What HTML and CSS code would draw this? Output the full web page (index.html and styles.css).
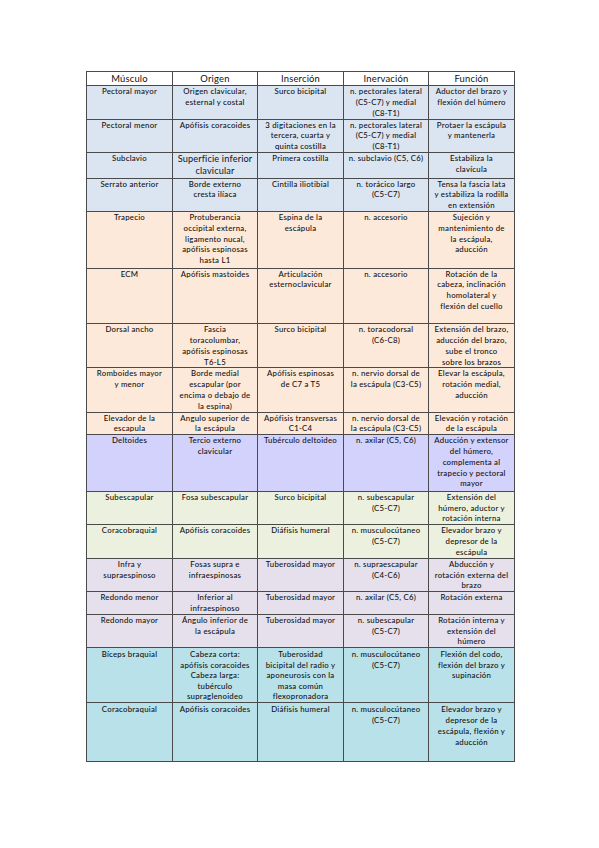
FILE: index.html
```html
<!DOCTYPE html>
<html lang="es">
<head>
<meta charset="utf-8">
<title>Músculos</title>
<link rel="stylesheet" href="styles.css">
</head>
<body>
<table class="tabla">
  <colgroup>
    <col class="c1"><col class="c2"><col class="c3"><col class="c4"><col class="c5">
  </colgroup>
  <thead>
    <tr class="head">
      <th>Músculo</th><th>Origen</th><th>Inserción</th><th>Inervación</th><th>Función</th>
    </tr>
  </thead>
  <tbody>
    <tr class="azul r34">
      <td>Pectoral mayor</td>
      <td>Origen clavicular,<br>esternal y costal</td>
      <td>Surco bicipital</td>
      <td>n. pectorales lateral<br>(C5-C7) y medial<br>(C8-T1)</td>
      <td>Aductor del brazo y<br>flexión del húmero</td>
    </tr>
    <tr class="azul r33">
      <td>Pectoral menor</td>
      <td>Apófisis coracoides</td>
      <td>3 digitaciones en la<br>tercera, cuarta y<br>quinta costilla</td>
      <td>n. pectorales lateral<br>(C5-C7) y medial<br>(C8-T1)</td>
      <td>Protaer la escápula<br>y mantenerla</td>
    </tr>
    <tr class="azul r26">
      <td>Subclavio</td>
      <td class="grande">Superficie inferior<br>clavicular</td>
      <td>Primera costilla</td>
      <td>n. subclavio (C5, C6)</td>
      <td>Estabiliza la<br>clavícula</td>
    </tr>
    <tr class="azul r32">
      <td>Serrato anterior</td>
      <td>Borde externo<br>cresta ilíaca</td>
      <td>Cintilla iliotibial</td>
      <td>n. torácico largo<br>(C5-C7)</td>
      <td>Tensa la fascia lata<br>y estabiliza la rodilla<br>en extensión</td>
    </tr>
    <tr class="salmon r57">
      <td>Trapecio</td>
      <td>Protuberancia<br>occipital externa,<br>ligamento nucal,<br>apófisis espinosas<br>hasta L1</td>
      <td>Espina de la<br>escápula</td>
      <td>n. accesorio</td>
      <td>Sujeción y<br>mantenimiento de<br>la escápula,<br>aducción</td>
    </tr>
    <tr class="salmon r56">
      <td>ECM</td>
      <td>Apófisis mastoides</td>
      <td>Articulación<br>esternoclavicular</td>
      <td>n. accesorio</td>
      <td>Rotación de la<br>cabeza, inclinación<br>homolateral y<br>flexión del cuello</td>
    </tr>
    <tr class="salmon r44">
      <td>Dorsal ancho</td>
      <td>Fascia<br>toracolumbar,<br>apófisis espinosas<br>T6-L5</td>
      <td>Surco bicipital</td>
      <td>n. toracodorsal<br>(C6-C8)</td>
      <td>Extensión del brazo,<br>aducción del brazo,<br>sube el tronco<br>sobre los brazos</td>
    </tr>
    <tr class="salmon r44">
      <td>Romboides mayor<br>y menor</td>
      <td>Borde medial<br>escapular (por<br>encima o debajo de<br>la espina)</td>
      <td>Apófisis espinosas<br>de C7 a T5</td>
      <td>n. nervio dorsal de<br>la escápula (C3-C5)</td>
      <td>Elevar la escápula,<br>rotación medial,<br>aducción</td>
    </tr>
    <tr class="salmon r23">
      <td>Elevador de la<br>escapula</td>
      <td>Angulo superior de<br>la escápula</td>
      <td>Apófisis transversas<br>C1-C4</td>
      <td>n. nervio dorsal de<br>la escápula (C3-C5)</td>
      <td>Elevación y rotación<br>de la escápula</td>
    </tr>
    <tr class="lavanda r57">
      <td>Deltoides</td>
      <td>Tercio externo<br>clavicular</td>
      <td>Tubérculo deltoideo</td>
      <td>n. axilar (C5, C6)</td>
      <td>Aducción y extensor<br>del húmero,<br>complementa al<br>trapecio y pectoral<br>mayor</td>
    </tr>
    <tr class="verde r33">
      <td>Subescapular</td>
      <td>Fosa subescapular</td>
      <td>Surco bicipital</td>
      <td>n. subescapular<br>(C5-C7)</td>
      <td>Extensión del<br>húmero, aductor y<br>rotación interna</td>
    </tr>
    <tr class="verde r34">
      <td>Coracobraquial</td>
      <td>Apófisis coracoides</td>
      <td>Diáfisis humeral</td>
      <td>n. musculocútaneo<br>(C5-C7)</td>
      <td>Elevador brazo y<br>depresor de la<br>escápula</td>
    </tr>
    <tr class="lila r34">
      <td>Infra y<br>supraespinoso</td>
      <td>Fosas supra e<br>infraespinosas</td>
      <td>Tuberosidad mayor</td>
      <td>n. supraescapular<br>(C4-C6)</td>
      <td>Abducción y<br>rotación externa del<br>brazo</td>
    </tr>
    <tr class="lila r23">
      <td>Redondo menor</td>
      <td>Inferior al<br>infraespinoso</td>
      <td>Tuberosidad mayor</td>
      <td>n. axilar (C5, C6)</td>
      <td>Rotación externa</td>
    </tr>
    <tr class="lila r33">
      <td>Redondo mayor</td>
      <td>Ángulo inferior de<br>la escápula</td>
      <td>Tuberosidad mayor</td>
      <td>n. subescapular<br>(C5-C7)</td>
      <td>Rotación interna y<br>extensión del<br>húmero</td>
    </tr>
    <tr class="aqua r54">
      <td>Bíceps braquial</td>
      <td>Cabeza corta:<br>apófisis coracoides<br>Cabeza larga:<br>tubérculo<br>supraglenoideo</td>
      <td>Tuberosidad<br>bicipital del radio y<br>aponeurosis con la<br>masa común<br>flexopronadora</td>
      <td>n. musculocútaneo<br>(C5-C7)</td>
      <td>Flexión del codo,<br>flexión del brazo y<br>supinación</td>
    </tr>
    <tr class="aqua r58">
      <td>Coracobraquial</td>
      <td>Apófisis coracoides</td>
      <td>Diáfisis humeral</td>
      <td>n. musculocútaneo<br>(C5-C7)</td>
      <td>Elevador brazo y<br>depresor de la<br>escápula, flexión y<br>aducción</td>
    </tr>
  </tbody>
</table>
</body>
</html>
```

FILE: styles.css
```css
html, body {
  margin: 0;
  padding: 0;
  background: #ffffff;
}

body {
  padding: 71px 0 0 86px;
  font-family: Lato, "Liberation Sans", sans-serif;
  color: #111111;
}

.tabla {
  border-collapse: collapse;
  table-layout: fixed;
  width: 428px;
}

.c1 { width: 86px; }
.c2 { width: 85px; }
.c3 { width: 86px; }
.c4 { width: 85px; }
.c5 { width: 86px; }

.tabla th,
.tabla td {
  border: 1px solid #4a4a4a;
  text-align: center;
  vertical-align: top;
  padding: 0 1px;
  overflow: hidden;
  white-space: nowrap;
}

.tabla th {
  font-size: 9.4px;
  font-weight: normal;
  letter-spacing: 0.2px;
  line-height: 13px;
  height: 12.6px;
  background: #ffffff;
}

.tabla td {
  font-size: 7.8px;
  font-weight: 500;
  line-height: 10.8px;
  letter-spacing: 0.25px;
}

.tabla td.grande {
  font-size: 9.2px;
  font-weight: normal;
  letter-spacing: 0.15px;
  line-height: 12.2px;
}

.r23 td { height: 21.6px; }
.r26 td { height: 24.6px; }
.r32 td { height: 30.6px; }
.r33 td { height: 31.6px; }
.r34 td { height: 32.6px; }
.r44 td { height: 42.6px; }
.r54 td { height: 53.2px; line-height: 10.5px; padding-top: 1px; }
.r56 td { height: 54.6px; }
.r57 td { height: 55.6px; }
.r58 td { height: 56.6px; padding-top: 1px; }

.azul td { background: #dbe5f1; }
.salmon td { background: #fde9d9; }
.lavanda td { background: #d2d2fd; }
.verde td { background: #ebf1de; }
.lila td { background: #e5e0ec; }
.aqua td { background: #b9e1ea; }
```
